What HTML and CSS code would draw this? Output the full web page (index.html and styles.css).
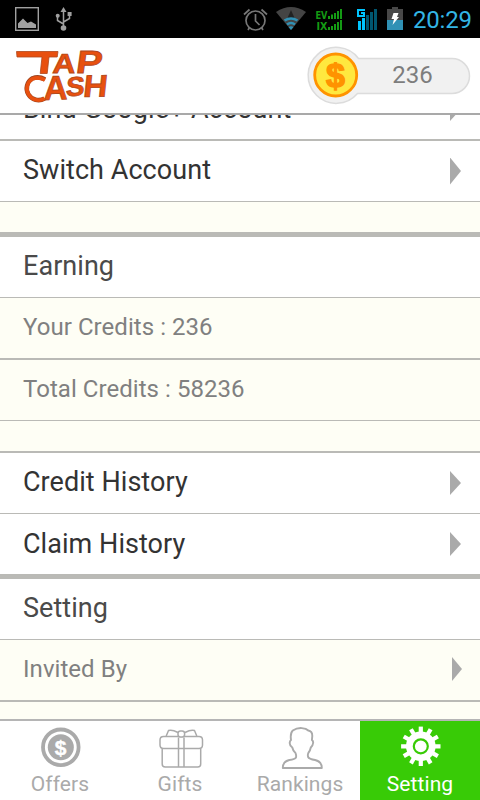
FILE: index.html
```html
<!DOCTYPE html>
<html lang="en">
<head>
    <meta charset="UTF-8">
    <title>Tap Cash</title>
    <link rel="stylesheet" href="styles.css">
</head>
<body>
<div class="status">
    <svg class="status-left" width="80" height="38" viewBox="0 0 80 38">
        <rect x="15.700" y="7.700" width="22.600" height="22.600" fill="none" stroke="#a0a0a0" stroke-width="1.400"/>
        <path d="M18 28v-4.500l5-5 4.500 4.500 3.500-1.500 5 3v3.500z" fill="#a0a0a0"/>
        <path d="M63.500 28V10M63.500 24l-6-3.500v-4.500M63.500 22l6-3.500v-4" fill="none" stroke="#a0a0a0" stroke-width="1.500"/>
        <path d="M63.500 7l3 5h-6z" fill="#a0a0a0"/>
        <circle cx="63.500" cy="28" r="2.800" fill="#a0a0a0"/>
        <circle cx="57.700" cy="15.800" r="2" fill="#a0a0a0"/>
        <rect x="67.600" y="12" width="4" height="4" fill="#a0a0a0"/>
    </svg>
    <svg class="status-right" width="172" height="38" viewBox="240 0 172 38">
        <g fill="none" stroke="#777" stroke-width="1.700">
            <circle cx="255.500" cy="20.500" r="9.500"/>
            <path d="M255.500 14v7l4 4M244 14.500l5.500-5M267 14.500l-5.500-5M249.500 27.500l-1.500 2.500M261.500 27.500l1.500 2.500"/>
        </g>
        <path d="M276 12q15-10 30 0l-15 18z" fill="#444"/>
        <path d="M287 19l4-9 4 9z" fill="#222"/>
        <g fill="none" stroke="#3091b5" stroke-width="2.600">
            <path d="M284.500 20.500q6.500-4 13 0M287 24.500q4-3 8 0"/>
        </g>
        <path d="M288.500 27q2.500-1.500 5 0l-2.500 3z" fill="#3091b5"/>
        <g fill="#149a14">
            <text class="net" x="315.500" y="19" textLength="12" lengthAdjust="spacingAndGlyphs">EV</text>
            <text class="net" x="316.500" y="30" textLength="11" lengthAdjust="spacingAndGlyphs">IX</text>
            <path d="M328 16h2v3h-2zM331 14.500h2v4.500h-2zM334 13h2v6h-2zM337 11h2v8h-2zM340 9h2v10h-2z"/>
            <path d="M328 27h2v3h-2zM331 26h2v4h-2zM334 24h2v6h-2zM337 22h2v8h-2zM340 20h2v10h-2z"/>
        </g>
        <path d="M357 9h8v2h-6v4h4v-1h-2v-2h4v5h-8zM358 21h3v9h-3zM362 18h3v12h-3z" fill="#00c5ff"/>
        <path d="M366 15h3v15h-3zM370 12h3v18h-3zM374 9h3v21h-3z" fill="#00566f"/>
        <path d="M387 9h5V7h6v2h5v12h-16z" fill="#484848"/>
        <rect x="387" y="20" width="16" height="10" fill="#3091b5"/>
        <path d="M393.500 13h5l-1.500 4h2l-6.500 8 1.500-6h-2.500z" fill="#fff"/>
    </svg>
    <span class="clock">20:29</span>
</div>

<div class="header">
    <svg class="logo" width="100" height="62" viewBox="12 44 100 62">
        <g class="logo-text">
            <path d="M16.500 51.500h41.500l-.8 5.500H49l-1.800 16.500h-7L42 57H17z"/>
            <text transform="translate(52 73.300) skewX(-4)" font-size="27.500" textLength="23" lengthAdjust="spacingAndGlyphs">A</text>
            <text transform="translate(75 73.300) skewX(-8)" font-size="32" textLength="26" lengthAdjust="spacingAndGlyphs">P</text>
            <text transform="translate(43.500 100) rotate(-2) skewX(-3)" font-size="34" textLength="24" lengthAdjust="spacingAndGlyphs">A</text>
            <text transform="translate(65.500 96.300) rotate(-3) skewX(-7)" font-size="27" textLength="18.500" lengthAdjust="spacingAndGlyphs">S</text>
            <text transform="translate(82.500 97) rotate(-1) skewX(-7)" font-size="31" textLength="24" lengthAdjust="spacingAndGlyphs">H</text>
        </g>
        <path d="M45 79.500Q39 76 32.500 78.300A11.200 11.200 0 1 0 44.500 98.500" fill="none" stroke="#9c4420" stroke-width="4.600"/>
        <path d="M45 80Q39 76.500 32.500 78.800A11.200 11.200 0 1 0 44.500 98.500" fill="none" stroke="#e8500f" stroke-width="3.600"/>
    </svg>
    <svg class="credits" width="166" height="60" viewBox="306 45 166 60">
        <path d="M358.500 58.500H452a17.500 17.500 0 0 1 0 35H357.500A28 28 0 1 1 358.500 58.500z" fill="#f1f1f1" stroke="#dcdcdc" stroke-width="1.500"/>
        <circle cx="335.700" cy="75" r="21" fill="#ffe83f" stroke="#ff9300" stroke-width="2.800"/>
        <text class="coin-sign" x="335.500" y="87">$</text>
        <text class="coin-num" x="412.500" y="83.300">236</text>
    </svg>
</div>

<div class="list">
    <div class="row link line2 first"><span>Bind Google+ Account</span><i class="arrow"></i></div>
    <div class="row link line1"><span>Switch Account</span><i class="arrow tall"></i></div>
    <div class="gap line5"></div>
    <div class="row title line1"><span>Earning</span></div>
    <div class="row sub line2"><span>Your Credits : 236</span></div>
    <div class="row sub line1"><span>Total Credits : 58236</span></div>
    <div class="gap line2"></div>
    <div class="row link line1"><span>Credit History</span><i class="arrow"></i></div>
    <div class="row link line5 last"><span>Claim History</span><i class="arrow"></i></div>
    <div class="row title line1"><span>Setting</span></div>
    <div class="row sub line2"><span>Invited By</span><i class="arrow small"></i></div>
</div>

<div class="nav">
    <div class="tab">
        <svg width="48" height="44" viewBox="36 725 48 44">
            <circle cx="60.800" cy="747.300" r="17.800" fill="none" stroke="#aaa" stroke-width="3.800"/>
            <circle cx="60.800" cy="747.300" r="13" fill="#aaa"/>
            <text class="offer-sign" x="60.700" y="754.700">$</text>
        </svg>
        <span>Offers</span>
    </div>
    <div class="tab">
        <svg width="48" height="44" viewBox="156 725 48 44">
            <g fill="none" stroke="#aaa" stroke-width="1.500">
                <path d="M163.500 736.500h35.500q3.500 0 3.500 3.500v5q0 3.500-3.500 3.500h-35.500q-3.500 0-3.500-3.500v-5q0-3.500 3.500-3.500z"/>
                <path d="M162.200 748.500v15.500q0 3 3 3h32.500q3 0 3-3v-15.500"/>
                <path d="M178.500 737.500V767M184 737.500V767"/>
                <path d="M178 732.500q-6-3.200-9.500-2l-2.300 5.500M185 732.500q6-3.200 9.500-2l2.300 5.500"/>
                <rect x="178" y="731" width="6.600" height="6" rx="2.500" fill="#fff"/>
            </g>
        </svg>
        <span>Gifts</span>
    </div>
    <div class="tab">
        <svg width="48" height="44" viewBox="276 725 48 44">
            <path d="M296 757.500q.5-2-.5-4.500-2.500-2-3.200-5.500-3-2-2.500-5 0-1.500 1.200-2.500-1-7 1.800-9.500 4-2.700 9-2.400 4.500.3 6.500 2.400 4 .5 4 5.500l-.4 4q1.500 1 1.200 3-.2 2.500-2.300 4.500-.7 3.500-2.500 5.500-.8 2-.2 4 1 2 7 3 6.700 1.500 6.700 8h-39q0-6.500 6.500-8 5.700-.7 6.700-2.500z" fill="none" stroke="#aaa" stroke-width="1.900" stroke-linejoin="round"/>
        </svg>
        <span>Rankings</span>
    </div>
    <div class="tab active">
        <svg width="48" height="44" viewBox="396 725 48 44">
            <g transform="translate(420.800 746.300)">
                <circle r="14.800" fill="#fff"/>
                <g stroke="#fff" stroke-width="4.200">
                    <path d="M0-19.700V19.700"/>
                    <path d="M0-19.700V19.700" transform="rotate(30)"/>
                    <path d="M0-19.700V19.700" transform="rotate(60)"/>
                    <path d="M0-19.700V19.700" transform="rotate(90)"/>
                    <path d="M0-19.700V19.700" transform="rotate(120)"/>
                    <path d="M0-19.700V19.700" transform="rotate(150)"/>
                </g>
                <circle r="7" fill="#fff" stroke="#38cb06" stroke-width="2.200"/>
            </g>
        </svg>
        <span>Setting</span>
    </div>
</div>
</body>
</html>
```
FILE: styles.css
```css
*{box-sizing:border-box;}
body{margin:0;width:480px;height:800px;overflow:hidden;display:flex;flex-direction:column;background:#fefef5;font-family:Roboto,"Liberation Sans",sans-serif;}
svg{display:block;flex:none;}
.status{height:38px;flex:none;background:#000;display:flex;justify-content:space-between;}
.status-right{margin-left:auto;}
.clock{width:68px;padding-left:1px;line-height:40px;font-size:24px;letter-spacing:-.2px;color:#33b5e5;white-space:nowrap;}
.net{font:bold 10px "DejaVu Sans",sans-serif;}
.header{height:77px;flex:none;background:#fff;border-bottom:2px solid #a9a9a9;display:flex;justify-content:space-between;padding:6px 8px 0 12px;}
.credits{margin-top:1px;}
.logo-text{font-family:"Liberation Sans",sans-serif;font-weight:bold;fill:#e8500f;stroke:#b0481a;stroke-width:.8px;}
.coin-sign{font:bold 34px "Liberation Sans",sans-serif;fill:#ff9300;stroke:#ff9300;stroke-width:1.4px;text-anchor:middle;}
.coin-num{font-size:24px;fill:#7d7d7d;text-anchor:middle;}
.list{flex:1;overflow:hidden;}
.row{display:flex;align-items:center;justify-content:space-between;box-sizing:content-box;height:60px;padding:0 19px 0 23px;border-bottom:0 solid #babab6;font-size:27px;letter-spacing:.05px;}
.first{margin-top:-36px;}
.row span{white-space:nowrap;padding-bottom:2px;}
.row.first span,.row.last span{padding-bottom:0;}
.link{background:#fff;color:#333;}
.title{background:#fff;color:#4a4a4a;}
.row.sub{color:#808080;font-size:24px;}
.gap{box-sizing:content-box;height:30px;border-bottom:0 solid #babab6;}
.row.line1{border-bottom-width:1px;}
.row.line2,.gap.line2{border-bottom-width:2px;}
.row.line5,.gap.line5{border-bottom-width:5px;}
.arrow{width:11px;height:24px;background:#aaa;clip-path:polygon(0 0,100% 50%,0 100%);}
.tall{height:27px;}
.small{width:10px;margin-right:-1px;margin-bottom:2px;}
.nav{height:81px;flex:none;display:flex;background:#fff;border-top:2px solid #b5b5b5;}
.tab{width:120px;display:flex;flex-direction:column;align-items:center;padding-top:4px;font-size:21px;line-height:26px;letter-spacing:.1px;color:#aaa;}
.tab span{margin-top:2px;}
.active{background:#38cb06;color:#fff;}
.offer-sign{font:bold 21px "Liberation Sans",sans-serif;fill:#fff;stroke:#fff;stroke-width:.4px;text-anchor:middle;}
```
